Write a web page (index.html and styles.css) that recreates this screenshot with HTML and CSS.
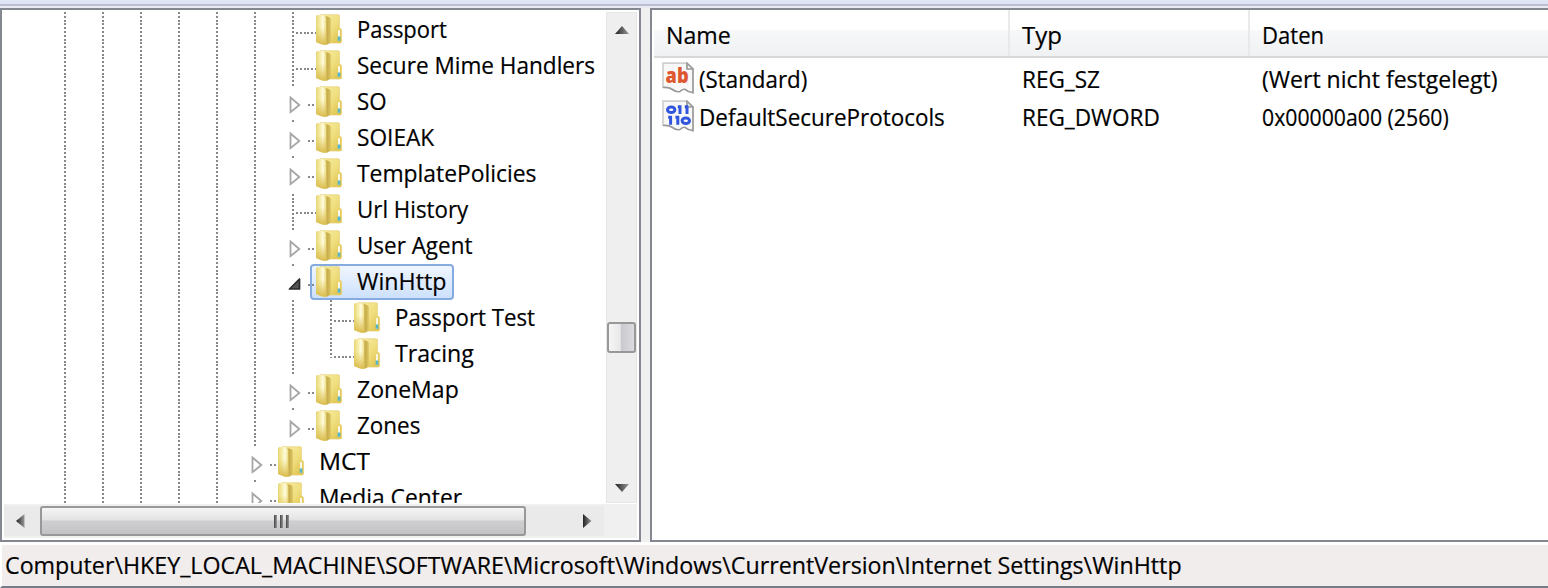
FILE: index.html
```
<!DOCTYPE html>
<html lang="de">
<head>
<meta charset="utf-8">
<title>Registrierungs-Editor</title>
<link rel="stylesheet" href="styles.css">
</head>
<body>
<svg class="defs" width="0" height="0">
  <defs>
    <linearGradient id="front" x1="0" y1="0" x2="1" y2="0"><stop offset="0" stop-color="#e6d678"/><stop offset=".3" stop-color="#f3e898"/><stop offset=".7" stop-color="#fffce0"/><stop offset="1" stop-color="#ecdc80"/></linearGradient>
    <linearGradient id="spine" x1="0" y1="0" x2="1" y2="0"><stop offset="0" stop-color="#dcc560"/><stop offset=".5" stop-color="#c8ad4c"/><stop offset="1" stop-color="#dcc563"/></linearGradient>
    <linearGradient id="back" x1="0" y1="0" x2="1" y2="1"><stop offset="0" stop-color="#f8f0a8"/><stop offset=".55" stop-color="#efdd7c"/><stop offset="1" stop-color="#dcbd42"/></linearGradient>
    <linearGradient id="shade" x1="0" y1="0" x2="0" y2="1"><stop offset=".4" stop-color="#e0c658" stop-opacity="0"/><stop offset="1" stop-color="#d9bb4c"/></linearGradient>
    <linearGradient id="arrowh" x1="0" y1="0" x2="1" y2="0"><stop offset="0" stop-color="#222"/><stop offset="1" stop-color="#999"/></linearGradient>
    <symbol id="folder" viewBox="0 0 28 32">
      <path d="M5 .8H23.6Q24.4 .8 24.4 2V13.5L26.6 15.5V27.5Q26.6 29 25 29H14L5 27Z" fill="url(#back)" stroke="#e6d27c" stroke-width=".8"/>
      <path d="M9 1.8 14.2 3Q15.8 3.8 15.8 5.5V28.5Q13 31 9 31Z" fill="url(#spine)"/>
      <path d="M1 2.5Q1 1 2.5 1L8 1.3Q11.2 2 11.2 5V30.5Q9 31 7 30.4L2 28.5Q1 28 1 27Z" fill="url(#front)"/>
      <path d="M1 2.5Q1 1 2.5 1L8 1.3Q11.2 2 11.2 5V30.5Q9 31 7 30.4L2 28.5Q1 28 1 27Z" fill="url(#shade)"/>
      <path d="M24 16V27" stroke="#f8f6e4" stroke-width="2"/>
      <path d="M24 22.5V26.8" stroke="#54b5c8" stroke-width="2.6"/>
    </symbol>
    <symbol id="closed" viewBox="0 0 14 20"><path d="M2.5 2.5 11.3 10 2.5 17.2Z" fill="#fff" stroke="#a6a6a6" stroke-width="1.8"/></symbol>
    <symbol id="open" viewBox="0 0 14 14"><path d="M11.5 2V12H1.5Z" fill="#555" stroke="#2b2b2b" stroke-width="1.7" stroke-linejoin="round"/></symbol>
    <symbol id="sheet" viewBox="0 0 32 32">
      <path d="M1 1.2H25L31 7.5V30.5L26 29 21 27 17 30 11 28.5 7 26 1 25.5Z" fill="#f8f8f8"/>
      <path d="M1 26V1.2H25" fill="none" stroke="#cfcfcf" stroke-width="1.7"/>
      <path d="M25 1.2V7H31ZM31 7V30.7Q26 30 23 27.3 20 27 18 29.5 14 30.5 10.5 27.5 7 25 1 25.5" fill="none" stroke="#999" stroke-width="1.7"/>
    </symbol>
  </defs>
</svg>
<div class="window">
  <div class="toolbar-edge"></div>
  <main class="panes">
    <section class="pane tree-pane">
      <div class="tree-main">
        <ul class="tree">
          <li class="row"><i class="g"></i><i class="g"></i><i class="g"></i><i class="g"></i><i class="g"></i><i class="g"></i><i class="g leaf"></i><span class="item"><svg class="folder"><use href="#folder"/></svg><span class="t t1">Passport</span></span></li>
          <li class="row"><i class="g"></i><i class="g"></i><i class="g"></i><i class="g"></i><i class="g"></i><i class="g"></i><i class="g leaf"></i><span class="item"><svg class="folder"><use href="#folder"/></svg><span class="t t2">Secure Mime Handlers</span></span></li>
          <li class="row"><i class="g"></i><i class="g"></i><i class="g"></i><i class="g"></i><i class="g"></i><i class="g"></i><i class="g exp"><svg><use href="#closed"/></svg></i><span class="item"><svg class="folder"><use href="#folder"/></svg><span class="t t3">SO</span></span></li>
          <li class="row"><i class="g"></i><i class="g"></i><i class="g"></i><i class="g"></i><i class="g"></i><i class="g"></i><i class="g exp"><svg><use href="#closed"/></svg></i><span class="item"><svg class="folder"><use href="#folder"/></svg><span class="t t4">SOIEAK</span></span></li>
          <li class="row"><i class="g"></i><i class="g"></i><i class="g"></i><i class="g"></i><i class="g"></i><i class="g"></i><i class="g exp"><svg><use href="#closed"/></svg></i><span class="item"><svg class="folder"><use href="#folder"/></svg><span class="t t5">TemplatePolicies</span></span></li>
          <li class="row"><i class="g"></i><i class="g"></i><i class="g"></i><i class="g"></i><i class="g"></i><i class="g"></i><i class="g leaf"></i><span class="item"><svg class="folder"><use href="#folder"/></svg><span class="t t6">Url History</span></span></li>
          <li class="row"><i class="g"></i><i class="g"></i><i class="g"></i><i class="g"></i><i class="g"></i><i class="g"></i><i class="g exp"><svg><use href="#closed"/></svg></i><span class="item"><svg class="folder"><use href="#folder"/></svg><span class="t t7">User Agent</span></span></li>
          <li class="row"><i class="g"></i><i class="g"></i><i class="g"></i><i class="g"></i><i class="g"></i><i class="g"></i><i class="g exp opened"><svg><use href="#open"/></svg></i><span class="item selected"><svg class="folder"><use href="#folder"/></svg><span class="t t8">WinHttp</span></span></li>
          <li class="row"><i class="g"></i><i class="g"></i><i class="g"></i><i class="g"></i><i class="g"></i><i class="g"></i><i class="g"></i><i class="g leaf"></i><span class="item"><svg class="folder"><use href="#folder"/></svg><span class="t t9">Passport Test</span></span></li>
          <li class="row"><i class="g"></i><i class="g"></i><i class="g"></i><i class="g"></i><i class="g"></i><i class="g"></i><i class="g"></i><i class="g leaf last"></i><span class="item"><svg class="folder"><use href="#folder"/></svg><span class="t t10">Tracing</span></span></li>
          <li class="row"><i class="g"></i><i class="g"></i><i class="g"></i><i class="g"></i><i class="g"></i><i class="g"></i><i class="g exp"><svg><use href="#closed"/></svg></i><span class="item"><svg class="folder"><use href="#folder"/></svg><span class="t t11">ZoneMap</span></span></li>
          <li class="row"><i class="g"></i><i class="g"></i><i class="g"></i><i class="g"></i><i class="g"></i><i class="g"></i><i class="g exp"><svg><use href="#closed"/></svg></i><span class="item"><svg class="folder"><use href="#folder"/></svg><span class="t t12">Zones</span></span></li>
          <li class="row"><i class="g"></i><i class="g"></i><i class="g"></i><i class="g"></i><i class="g"></i><i class="g exp"><svg><use href="#closed"/></svg></i><span class="item"><svg class="folder"><use href="#folder"/></svg><span class="t t13">MCT</span></span></li>
          <li class="row"><i class="g"></i><i class="g"></i><i class="g"></i><i class="g"></i><i class="g"></i><i class="g exp"><svg><use href="#closed"/></svg></i><span class="item"><svg class="folder"><use href="#folder"/></svg><span class="t t14">Media Center</span></span></li>
        </ul>
        <div class="vscroll">
          <svg class="up" viewBox="0 0 16 9"><path d="M8 0 15 8H1Z" fill="url(#arrowh)"/></svg>
          <div class="vthumb"></div>
          <svg class="down" viewBox="0 0 16 9"><path d="M1 0H15L8 8Z" fill="url(#arrowh)"/></svg>
        </div>
      </div>
      <div class="tree-foot">
        <div class="hscroll">
          <svg class="left" viewBox="0 0 9 16"><path d="M8.5 1V15L0 8Z" fill="url(#arrowh)"/></svg>
          <div class="hthumb"><b></b><b></b><b></b></div>
          <svg class="right" viewBox="0 0 9 16"><path d="M0 1 8.5 8 0 15Z" fill="url(#arrowh)"/></svg>
        </div>
      </div>
    </section>
    <section class="pane list-pane">
      <div class="head"><span class="c1"><span class="t h1">Name</span></span><span class="c2"><span class="t h2">Typ</span></span><span class="c3"><span class="t h3">Daten</span></span></div>
      <div class="values">
        <div class="value">
          <span class="c1"><svg class="vicon" viewBox="0 0 32 32"><use href="#sheet"/><text x="3.6" y="20.5" textLength="23" lengthAdjust="spacingAndGlyphs" class="ab">ab</text></svg><span class="t v1">(Standard)</span></span><span class="c2"><span class="t v2">REG_SZ</span></span><span class="c3"><span class="t v3">(Wert nicht festgelegt)</span></span>
        </div>
        <div class="value">
          <span class="c1"><svg class="vicon" viewBox="0 0 32 32"><use href="#sheet"/><g fill="none" stroke="#3155dc" stroke-width="3"><ellipse cx="9.2" cy="9.8" rx="3.7" ry="2.8"/><path d="M15.8 6.8H18V14M22.8 6.8H25V14M6.2 17.2H8.6V24.8M13.4 17.2H15.8V24.8"/><ellipse cx="23.8" cy="20.8" rx="3.7" ry="2.8"/></g></svg><span class="t v4">DefaultSecureProtocols</span></span><span class="c2"><span class="t v5">REG_DWORD</span></span><span class="c3"><span class="t v6">0x00000a00 (2560)</span></span>
        </div>
      </div>
    </section>
  </main>
  <footer class="status"><span class="t s1">Computer\HKEY_LOCAL_MACHINE\SOFTWARE\Microsoft\Windows\CurrentVersion\Internet Settings\WinHttp</span></footer>
</div>
</body>
</html>
```
FILE: styles.css
```
* { box-sizing: border-box; }
body { margin: 0; background: #f0f0f0; font: 24px/36px "Open Sans", "Noto Sans", sans-serif; color: #000; }
.defs { display: block; }
svg { display: block; flex: none; }
.window { width: 1548px; height: 588px; display: flex; flex-direction: column; overflow: hidden; }
.toolbar-edge { height: 8px; flex: none; background: linear-gradient(#dfe4f5 4px, #bbbed2 4px, #bbbed2 6px, #e9ebf0 6px); }
.panes { display: flex; gap: 9px; height: 534px; flex: none; }
.pane { border: 2px solid #828790; background: #fff; }
.tree-pane { width: 641px; padding: 2px; display: flex; flex-direction: column; }
.list-pane { flex: 1; border-right: 0; }
.t { display: inline-block; white-space: nowrap; transform-origin: 0 50%; -webkit-text-stroke: .2px #000; }

/* Condensed widths of the labels */
.t1 { transform: scaleX(.915); }
.t2 { transform: scaleX(.94); }
.t3 { transform: scaleX(.93); }
.t4 { transform: scaleX(.945); }
.t5 { transform: scaleX(.952); }
.t6 { transform: scaleX(.93); }
.t7 { transform: scaleX(.935); }
.t8 { transform: scaleX(.967); }
.t9 { transform: scaleX(.927); }
.t10 { transform: scaleX(.965); }
.t11 { transform: scaleX(.96); }
.t12 { transform: scaleX(.935); }
.t13 { transform: scaleX(1.02); }
.t14 { transform: scaleX(.95); }
.h1 { transform: scaleX(.965); }
.h3 { transform: scaleX(.92); }
.v1 { transform: scaleX(.93); }
.v2 { transform: scaleX(.94); }
.v3 { transform: scaleX(.96); }
.v4 { transform: scaleX(.935); }
.v5 { transform: scaleX(.94); }
.v6 { transform: scaleX(.885); }
.s1 { transform: scaleX(.968); }

.tree-main { display: flex; height: 491px; flex: none; gap: 2px; }
.tree { width: 600px; margin: 0; padding: 0 0 0 42px; list-style: none; overflow: hidden; }
.row { display: flex; height: 36px; }
.g { position: relative; width: 38px; flex: none; height: 36px; background: repeating-linear-gradient(#888 0 2px, transparent 2px 3.789px) 18px 0 / 2px 36px no-repeat; }
.row:nth-child(even) .g { background-image: repeating-linear-gradient(#888 0 .1px, transparent .1px 1.9px, #888 1.9px 3.789px); }
.g.leaf::after { content: ""; position: absolute; left: 22px; top: 20px; width: 20px; height: 2px; background: repeating-linear-gradient(90deg, #888 0 2px, transparent 2px 3.8px); }
.row .g.leaf.last { background-size: 2px 22px; }
.row .g.exp { background: linear-gradient(#888, #888) 18px 0 / 2px 2px no-repeat; }
.g.exp svg { position: absolute; left: 14px; top: 11px; width: 14px; height: 20px; }
.g.opened svg { top: 13px; width: 14px; height: 14px; left: 14px; }
.g.exp::after { content: ""; position: absolute; left: 34px; top: 20px; width: 6px; height: 2px; background: linear-gradient(90deg, #888 2px, transparent 2px 4px, #888 4px); z-index: 1; }
.item { display: flex; height: 36px; margin-left: -2px; padding: 0 7px 0 4px; border: 1px solid transparent; }
.item .t { margin-left: 13.5px; line-height: 32px; }
.folder { width: 28px; height: 32px; margin-top: 1px; }
.selected { width: 144px; border: 2px solid #86abe0; border-radius: 4px; background: linear-gradient(#f0f6fe, #cde1fc); padding-left: 3px; }
.selected .t { line-height: 30px; }
.selected .folder { margin-top: 0; }

.vscroll { width: 31px; background: #efefef; border: 1px solid #e6e6e6; display: flex; flex-direction: column; align-items: center; }
.up { width: 16px; height: 9px; margin-top: 13px; }
.vthumb { width: 29px; height: 31px; margin-top: 287px; border: 2px solid #989898; border-radius: 3px; background: linear-gradient(90deg, #f5f5f5, #e8e8ea 45%, #c9c9cf 50%, #dcdcdf); }
.down { width: 16px; height: 9px; margin-top: 131px; }
.tree-foot { height: 35px; flex: none; padding-top: 2px; background: #f0f0f0; border-top: 1px solid #fff; }
.hscroll { width: 600px; height: 30px; background: #eaeaea; display: flex; align-items: center; }
.left { width: 9px; height: 16px; margin-left: 12px; }
.hthumb { width: 486px; height: 30px; margin-left: 15px; border: 2px solid #989898; border-radius: 3px; background: linear-gradient(#f5f5f5, #e4e4e5 45%, #cfcfd1 50%, #c3c3c6); display: flex; justify-content: center; align-items: center; gap: 3px; padding-right: 3px; }
.hthumb b { width: 3px; height: 13px; background: linear-gradient(90deg, #444, #999); }
.right { width: 9px; height: 16px; margin-left: 57px; }

.head { display: flex; height: 48px; margin-left: 2px; border-bottom: 2px solid #d8d8d8; background: linear-gradient(#fff 20px, #f7f8fa 20px, #f0f1f2); }
.head > span { padding-top: 7px; }
.head .c1, .head .c2 { border-right: 2px solid #e8e9eb; }
.head .c1 { padding-left: 12px; }
.c1 { width: 356px; flex: none; display: flex; }
.c2 { width: 240px; flex: none; padding-left: 12px; }
.c3 { padding-left: 12px; }
.values { padding: 3px 0 0 2px; }
.value { display: flex; height: 38px; }
.value .c1 { padding-left: 8px; gap: 4.5px; }
.vicon { width: 32px; height: 32px; margin-top: 1px; }
.ab { font: 800 21px "Open Sans", sans-serif; fill: #de5730; }
.status { height: 46px; flex: none; margin: 0; border-top: 3px solid #fff; border-bottom: 2px solid #777e8b; border-left: 2px solid #fff; background: #f1eded; padding: 2px 0 0 3px; }
```
